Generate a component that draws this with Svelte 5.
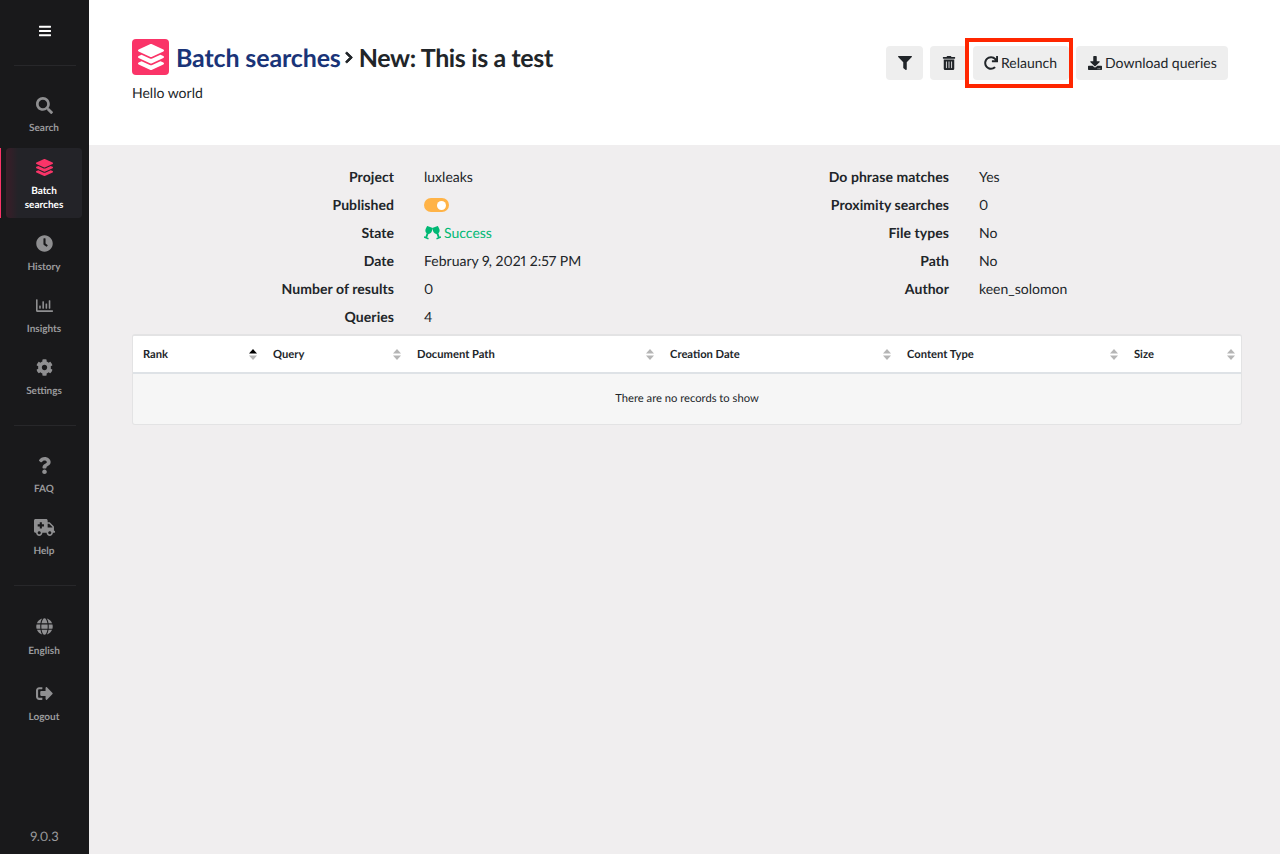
<script>
  const icons = {
    search: { vb: '0 0 512 512', d: 'M505 442.7L405.3 343c-4.5-4.5-10.6-7-17-7H372c27.6-35.3 44-79.7 44-128C416 93.1 322.9 0 208 0S0 93.1 0 208s93.1 208 208 208c48.3 0 92.7-16.4 128-44v16.3c0 6.4 2.5 12.5 7 17l99.7 99.7c9.4 9.4 24.6 9.4 33.9 0l28.3-28.3c9.4-9.4 9.4-24.6.1-34zM208 336c-70.7 0-128-57.2-128-128 0-70.7 57.2-128 128-128 70.7 0 128 57.2 128 128 0 70.7-57.2 128-128 128z' },
    layers: { vb: '0 0 512 512', d: 'M12.41 148.02l232.94 105.67c6.8 3.09 14.49 3.09 21.29 0l232.94-105.67c16.55-7.51 16.55-32.52 0-40.03L266.65 2.31a25.607 25.607 0 0 0-21.29 0L12.41 107.98c-16.55 7.51-16.55 32.53 0 40.04zm487.18 88.28l-58.09-26.33-161.64 73.27c-7.56 3.43-15.59 5.17-23.86 5.17s-16.29-1.74-23.86-5.17L70.51 209.97l-58.1 26.33c-16.55 7.5-16.55 32.5 0 40l232.94 105.59c6.8 3.08 14.49 3.08 21.29 0L499.59 276.3c16.55-7.5 16.55-32.5 0-40zm0 127.8l-57.87-26.23-161.86 73.37c-7.56 3.43-15.59 5.17-23.86 5.17s-16.29-1.74-23.86-5.17L70.29 337.87 12.41 364.1c-16.55 7.5-16.55 32.5 0 40l232.94 105.59c6.8 3.08 14.49 3.08 21.29 0L499.59 404.1c16.55-7.5 16.55-32.5 0-40z' },
    clock: { vb: '0 0 512 512', d: 'M256,8C119,8,8,119,8,256S119,504,256,504,504,393,504,256,393,8,256,8Zm92.49,313h0l-20,25a16,16,0,0,1-22.49,2.5h0l-67-49.72a40,40,0,0,1-15-31.23V112a16,16,0,0,1,16-16h32a16,16,0,0,1,16,16V256l58,42.5A16,16,0,0,1,348.49,321Z' },
    chart: { vb: '0 0 512 512', d: 'M396.8 352h22.4c6.4 0 12.8-6.4 12.8-12.8V108.8c0-6.4-6.4-12.8-12.8-12.8h-22.4c-6.4 0-12.8 6.4-12.8 12.8v230.4c0 6.4 6.4 12.8 12.8 12.8zm-192 0h22.4c6.4 0 12.8-6.4 12.8-12.8V140.8c0-6.4-6.4-12.8-12.8-12.8h-22.4c-6.4 0-12.8 6.4-12.8 12.8v198.4c0 6.4 6.4 12.8 12.8 12.8zm96 0h22.4c6.4 0 12.8-6.4 12.8-12.8V204.8c0-6.4-6.4-12.8-12.8-12.8h-22.4c-6.4 0-12.8 6.4-12.8 12.8v134.4c0 6.4 6.4 12.8 12.8 12.8zm-192 0h22.4c6.4 0 12.8-6.4 12.8-12.8v-70.4c0-6.4-6.4-12.8-12.8-12.8h-22.4c-6.4 0-12.8 6.4-12.8 12.8v70.4c0 6.4 6.4 12.8 12.8 12.8zM496 400H48V80c0-8.84-7.16-16-16-16H16C7.16 64 0 71.16 0 80v336c0 17.67 14.33 32 32 32h464c8.84 0 16-7.16 16-16v-16c0-8.84-7.16-16-16-16z' },
    cog: { vb: '0 0 512 512', d: 'M487.4 315.7l-42.6-24.6c4.3-23.2 4.3-47 0-70.2l42.6-24.6c4.9-2.8 7.1-8.6 5.5-14-11.1-35.6-30-67.8-54.7-94.6-3.8-4.1-10-5.1-14.8-2.3L380.8 110c-17.9-15.4-38.5-27.3-60.8-35.1V25.8c0-5.6-3.9-10.5-9.4-11.7-36.7-8.2-74.3-7.8-109.2 0-5.5 1.2-9.4 6.1-9.4 11.7V75c-22.2 7.9-42.8 19.8-60.8 35.1L88.7 85.5c-4.9-2.8-11-1.9-14.8 2.3-24.7 26.7-43.6 58.9-54.7 94.6-1.7 5.4.6 11.2 5.5 14L67.3 221c-4.3 23.2-4.3 47 0 70.2l-42.6 24.6c-4.9 2.8-7.1 8.6-5.5 14 11.1 35.6 30 67.8 54.7 94.6 3.8 4.1 10 5.1 14.8 2.3l42.6-24.6c17.9 15.4 38.5 27.3 60.8 35.1v49.2c0 5.6 3.9 10.5 9.4 11.7 36.7 8.2 74.3 7.8 109.2 0 5.5-1.2 9.4-6.1 9.4-11.7v-49.2c22.2-7.9 42.8-19.8 60.8-35.1l42.6 24.6c4.9 2.8 11 1.9 14.8-2.3 24.7-26.7 43.6-58.9 54.7-94.6 1.5-5.5-.7-11.3-5.6-14.1zM256 336c-44.1 0-80-35.9-80-80s35.9-80 80-80 80 35.9 80 80-35.9 80-80 80z' },
    question: { vb: '0 0 384 512', d: 'M202.021 0C122.202 0 70.503 32.703 29.914 91.026c-7.363 10.58-5.093 25.086 5.178 32.874l43.138 32.709c10.373 7.865 25.132 6.026 33.253-4.148 25.049-31.381 43.63-49.449 82.757-49.449 30.764 0 68.816 19.799 68.816 49.631 0 22.552-18.617 34.134-48.993 51.164-35.423 19.86-82.299 44.576-82.299 106.405V320c0 13.255 10.745 24 24 24h72.471c13.255 0 24-10.745 24-24v-5.773c0-42.86 125.268-44.645 125.268-160.627C377.504 66.256 286.902 0 202.021 0zM192 373.459c-38.196 0-69.271 31.075-69.271 69.271 0 38.195 31.075 69.27 69.271 69.27s69.271-31.075 69.271-69.271-31.075-69.27-69.271-69.27z' },
    ambulance: { vb: '0 0 640 512', d: 'M624 352h-16V243.9c0-12.7-5.1-24.9-14.1-33.9L494 110.1c-9-9-21.2-14.1-33.9-14.1H416V48c0-26.5-21.5-48-48-48H48C21.5 0 0 21.5 0 48v320c0 26.5 21.5 48 48 48h16c0 53 43 96 96 96s96-43 96-96h128c0 53 43 96 96 96s96-43 96-96h48c8.8 0 16-7.2 16-16v-32c0-8.8-7.2-16-16-16zM160 464c-26.5 0-48-21.5-48-48s21.5-48 48-48 48 21.5 48 48-21.5 48-48 48zm144-248c0 4.4-3.6 8-8 8h-56v56c0 4.4-3.6 8-8 8h-48c-4.4 0-8-3.6-8-8v-56h-56c-4.4 0-8-3.6-8-8v-48c0-4.4 3.6-8 8-8h56v-56c0-4.4 3.6-8 8-8h48c4.4 0 8 3.6 8 8v56h56c4.4 0 8 3.6 8 8v48zm176 248c-26.5 0-48-21.5-48-48s21.5-48 48-48 48 21.5 48 48-21.5 48-48 48zm80-208H416V144h44.1l99.9 99.9V256z' },
    globe: { vb: '0 0 496 512', d: 'M336.5 160C322 70.7 287.8 8 248 8s-74 62.7-88.5 152h177zM152 256c0 22.2 1.2 43.5 3.3 64h185.3c2.1-20.5 3.3-41.8 3.3-64s-1.2-43.5-3.3-64H155.3c-2.1 20.5-3.3 41.8-3.3 64zm324.7-96c-28.6-67.9-86.5-120.4-158-141.6 24.4 33.8 41.2 84.7 50 141.6h108zM177.2 18.4C105.8 39.6 47.8 92.1 19.3 160h108c8.7-56.9 25.5-107.8 49.9-141.6zM487.4 192H372.7c2.1 21 3.3 42.5 3.3 64s-1.2 43-3.3 64h114.6c5.5-20.5 8.6-41.8 8.6-64s-3.1-43.5-8.5-64zM120 256c0-21.5 1.2-43 3.3-64H8.6C3.2 212.5 0 233.8 0 256s3.2 43.5 8.6 64h114.6c-2-21-3.2-42.5-3.2-64zm39.5 96c14.5 89.3 48.7 152 88.5 152s74-62.7 88.5-152h-177zm159.3 141.6c71.4-21.2 129.4-73.7 158-141.6h-108c-8.8 56.9-25.6 107.8-50 141.6zM19.3 352c28.6 67.9 86.5 120.4 158 141.6-24.4-33.8-41.2-84.7-50-141.6h-108z' },
    logout: { vb: '0 0 512 512', d: 'M497 273L329 441c-15 15-41 4.5-41-17v-96H152c-13.3 0-24-10.7-24-24v-96c0-13.3 10.7-24 24-24h136V88c0-21.4 25.9-32 41-17l168 168c9.3 9.4 9.3 24.6 0 34zM192 436v-40c0-6.6-5.4-12-12-12H96c-17.7 0-32-14.3-32-32V160c0-17.7 14.3-32 32-32h84c6.6 0 12-5.4 12-12V76c0-6.6-5.4-12-12-12H96c-53 0-96 43-96 96v192c0 53 43 96 96 96h84c6.6 0 12-5.4 12-12z' }
  };
  const bars = 'M16 132h416c8.837 0 16-7.163 16-16V76c0-8.837-7.163-16-16-16H16C7.163 60 0 67.163 0 76v40c0 8.837 7.163 16 16 16zm0 160h416c8.837 0 16-7.163 16-16v-40c0-8.837-7.163-16-16-16H16c-8.837 0-16 7.163-16 16v40c0 8.837 7.163 16 16 16zm0 160h416c8.837 0 16-7.163 16-16v-40c0-8.837-7.163-16-16-16H16c-8.837 0-16 7.163-16 16v40c0 8.837 7.163 16 16 16z';
  const glass = 'M-3.200 0H3.200L3.500 3.700C3.500 6 2 7.200 1 7.500V11.400H2.800V13H-2.800V11.400H-1V7.500C-2 7.200-3.500 6-3.500 3.700Z';
  const groups = [
    [
      { icon: 'search', label: 'Search' },
      { icon: 'layers', label: 'Batch searches', active: true },
      { icon: 'clock', label: 'History' },
      { icon: 'chart', label: 'Insights' },
      { icon: 'cog', label: 'Settings' }
    ],
    [
      { icon: 'question', label: 'FAQ' },
      { icon: 'ambulance', label: 'Help', wide: true }
    ],
    [
      { icon: 'globe', label: 'English', tall: true },
      { icon: 'logout', label: 'Logout' }
    ]
  ];
  const left = [
    ['Project', 'luxleaks'],
    ['Published', 'toggle'],
    ['State', 'state'],
    ['Date', 'February 9, 2021 2:57 PM'],
    ['Number of results', '0'],
    ['Queries', '4']
  ];
  const right = [
    ['Do phrase matches', 'Yes'],
    ['Proximity searches', '0'],
    ['File types', 'No'],
    ['Path', 'No'],
    ['Author', 'keen_solomon']
  ];
  const cols = [
    { label: 'Rank', sorted: true },
    { label: 'Query' },
    { label: 'Document Path' },
    { label: 'Creation Date' },
    { label: 'Content Type' },
    { label: 'Size' }
  ];
</script>

{#snippet info(rows)}
  <dl class="info">
    {#each rows as [k, v]}
      <dt>{k}</dt>
      <dd>
        {#if v === 'toggle'}
          <span class="toggle"><span class="knob"></span></span>
        {:else if v === 'state'}
          <span class="success">
            <svg class="cheers" viewBox="0 0 18 14" aria-hidden="true">
              <path transform="translate(6.300 .6) rotate(20)" d={glass} />
              <path transform="translate(11.700 .6) rotate(-20)" d={glass} />
            </svg>
            Success
          </span>
        {:else}
          {v}
        {/if}
      </dd>
    {/each}
  </dl>
{/snippet}

<div class="app">
  <aside class="sidebar">
    <div class="burger">
      <svg viewBox="0 0 448 512" aria-hidden="true"><path d={bars} /></svg>
    </div>
    {#each groups as group}
      <hr />
      <nav class="group">
        {#each group as item}
          <div class="item" class:active={item.active} class:tall={item.tall}>
            <svg class="ico" class:wide={item.wide} viewBox={icons[item.icon].vb} aria-hidden="true"><path d={icons[item.icon].d} /></svg>
            <span class="lbl">{item.label}</span>
          </div>
        {/each}
      </nav>
    {/each}
    <div class="version">9.0.3</div>
  </aside>

  <main class="main">
    <header class="head">
      <div class="titles">
        <h1>
          <span class="logo"><svg viewBox="0 0 512 512" aria-hidden="true"><path d={icons.layers.d} /></svg></span>
          <span class="crumb">Batch searches</span>
          <svg class="chev" viewBox="0 0 320 512" aria-hidden="true"><path d="M285.476 272.971L91.132 467.314c-9.373 9.373-24.569 9.373-33.941 0l-22.667-22.667c-9.357-9.357-9.375-24.522-.04-33.901L188.505 256 34.484 101.255c-9.335-9.379-9.317-24.544.04-33.901l22.667-22.667c9.373-9.373 24.569-9.373 33.941 0L285.475 239.03c9.373 9.372 9.373 24.568.001 33.941z" /></svg>
          <span class="name">New: This is a test</span>
        </h1>
        <p class="sub">Hello world</p>
      </div>
      <div class="actions">
        <button class="btn square" aria-label="Filter">
          <svg viewBox="0 0 512 512" aria-hidden="true"><path d="M487.976 0H24.028C2.71 0-8.047 25.866 7.058 40.971L192 225.941V432c0 7.831 3.821 15.17 10.237 19.662l80 55.98C298.02 518.69 320 507.493 320 487.98V225.941l184.947-184.97C520.021 25.896 509.338 0 487.976 0z" /></svg>
        </button>
        <button class="btn square" aria-label="Delete">
          <svg viewBox="0 0 448 512" aria-hidden="true"><path d="M32 464a48 48 0 0 0 48 48h288a48 48 0 0 0 48-48V128H32zm272-256a16 16 0 0 1 32 0v224a16 16 0 0 1-32 0zm-96 0a16 16 0 0 1 32 0v224a16 16 0 0 1-32 0zm-96 0a16 16 0 0 1 32 0v224a16 16 0 0 1-32 0zM432 32H312l-9.4-18.7A24 24 0 0 0 281.1 0H166.8a23.72 23.72 0 0 0-21.4 13.3L136 32H16A16 16 0 0 0 0 48v32a16 16 0 0 0 16 16h416a16 16 0 0 0 16-16V48a16 16 0 0 0-16-16z" /></svg>
        </button>
        <button class="btn relaunch">
          <svg viewBox="0 0 512 512" aria-hidden="true"><path d="M500.33 0h-47.41a12 12 0 0 0-12 12.57l4 82.76A247.42 247.42 0 0 0 256 8C119.34 8 7.9 119.53 8 256.19 8.1 393.07 119.1 504 256 504a247.1 247.1 0 0 0 166.18-63.91 12 12 0 0 0 .48-17.43l-34-34a12 12 0 0 0-16.38-.55A176 176 0 1 1 402.1 157.8l-101.53-4.87a12 12 0 0 0-12.57 12v47.41a12 12 0 0 0 12 12h200.33a12 12 0 0 0 12-12V12a12 12 0 0 0-12-12z" /></svg>
          Relaunch
          <span class="marker"></span>
        </button>
        <button class="btn download">
          <svg viewBox="0 0 512 512" aria-hidden="true"><path d="M216 0h80c13.3 0 24 10.7 24 24v168h87.7c17.8 0 26.7 21.5 14.1 34.1L269.7 378.3c-7.5 7.5-19.8 7.5-27.3 0L90.1 226.1c-12.6-12.6-3.7-34.1 14.1-34.1H192V24c0-13.3 10.7-24 24-24zm296 376v112c0 13.3-10.7 24-24 24H24c-13.3 0-24-10.7-24-24V376c0-13.3 10.7-24 24-24h146.7l49 49c20.1 20.1 52.5 20.1 72.6 0l49-49H488c13.3 0 24 10.7 24 24zm-124 88c0-11-9-20-20-20s-20 9-20 20 9 20 20 20 20-9 20-20zm64 0c0-11-9-20-20-20s-20 9-20 20 9 20 20 20 20-9 20-20z" /></svg>
          Download queries
        </button>
      </div>
    </header>

    <section class="content">
      <div class="infos">
        {@render info(left)}
        {@render info(right)}
      </div>
      <div class="table">
        <div class="thead">
          {#each cols as c}
            <div class="th">
              <span>{c.label}</span>
              <svg class="sort" viewBox="0 0 8 11" aria-hidden="true">
                <path class:on={c.sorted} d="M4 0 8 4.500H0Z" />
                <path d="M4 11 0 6.500H8Z" />
              </svg>
            </div>
          {/each}
        </div>
        <div class="empty">There are no records to show</div>
      </div>
    </section>
  </main>
</div>

<style>
  :global(body) {
    margin: 0;
    font-family: Lato, "Liberation Sans", sans-serif;
    color: #212529;
    background: #f0eeef;
    text-rendering: geometricPrecision;
  }
  .app {
    display: flex;
    min-height: 854px;
  }
  .sidebar {
    width: 89px;
    flex: none;
    background: #19191b;
    display: flex;
    flex-direction: column;
    color: #9b9b9d;
  }
  .burger {
    height: 50px;
    display: flex;
    align-items: center;
    justify-content: center;
    padding-top: 12px;
    box-sizing: border-box;
  }
  .burger svg {
    width: 12px;
    height: 14px;
    fill: #fff;
  }
  hr {
    width: 62px;
    height: 1px;
    border: 0;
    margin: 15px auto 20px;
    background: #27272a;
  }
  .group {
    display: flex;
    flex-direction: column;
    gap: 6px;
    margin-bottom: 6px;
  }
  .item {
    margin: 0 7px 0 6px;
    min-height: 56px;
    padding-top: 11px;
    box-sizing: border-box;
    display: flex;
    flex-direction: column;
    align-items: center;
    position: relative;
    border-radius: 4px;
    font-size: 10px;
    font-weight: 700;
    line-height: 14px;
    text-align: center;
  }
  .item.tall { margin-top: 1px; margin-bottom: 5px; }
  .item.tall .ico { margin-bottom: 9px; }
  .item.active {
    background: linear-gradient(90deg, #3a1d28 0, #232328 12px);
    color: #fff;
    min-height: 70px;
  }
  .item.active::before {
    content: "";
    position: absolute;
    left: -6px;
    top: 0;
    bottom: 0;
    width: 1px;
    background: #fa3468;
  }
  .item.active .ico { fill: #fa3468; }
  .ico {
    width: 17px;
    height: 17px;
    fill: #8f8f91;
    margin-bottom: 8px;
  }
  .group:nth-of-type(1) .item:first-child .ico { margin-bottom: 7px; }
  .ico.wide { width: 21px; }
  .lbl { width: 50px; }
  .version {
    margin-top: auto;
    padding-bottom: 10px;
    text-align: center;
    font-size: 13px;
    line-height: 16px;
    color: #9b9b9d;
    font-variant-numeric: proportional-nums;
  }
  .main {
    flex: 1;
    min-width: 0;
  }
  .head {
    background: #fff;
    height: 145px;
    box-sizing: border-box;
    padding: 39px 52px 0 43px;
    display: flex;
    justify-content: space-between;
    align-items: flex-start;
  }
  h1 {
    margin: 0;
    display: flex;
    align-items: center;
    font-size: 25px;
    font-weight: 700;
    line-height: 36px;
    color: #212529;
  }
  .logo {
    width: 37px;
    height: 36px;
    border-radius: 4px;
    background: #fa3468;
    display: flex;
    align-items: center;
    justify-content: center;
    margin-right: 7px;
  }
  .logo svg {
    width: 26px;
    height: 26px;
    fill: #fff;
  }
  .crumb {
    color: #1a3478;
    letter-spacing: -.14px;
    line-height: 34px;
    padding-top: 2px;
  }
  .name {
    letter-spacing: -.37px;
    line-height: 34px;
    padding-top: 2px;
  }
  .chev {
    width: 8px;
    height: 13px;
    margin: 1px 6px 0 4px;
    fill: #212529;
    stroke: #212529;
    stroke-width: 36px;
  }
  .sub {
    margin: 9px 0 0;
    font-size: 14px;
    line-height: 18px;
  }
  .actions {
    display: flex;
    gap: 7px;
    margin-top: 7px;
  }
  .btn {
    height: 34px;
    border: 0;
    border-radius: 4px;
    background: #eee;
    padding: 0 12px 1px;
    font: 14px Lato, sans-serif;
    text-rendering: geometricPrecision;
    color: #212529;
    display: flex;
    align-items: center;
    gap: 3px;
    position: relative;
    white-space: nowrap;
  }
  .btn svg {
    width: 14px;
    height: 14px;
    fill: #212529;
    flex: none;
  }
  .btn.square {
    width: 37px;
    padding: 0;
    justify-content: center;
  }
  .relaunch { width: 96px; padding: 0 0 1px 11px; margin-left: -1px; }
  .download { width: 152px; }
  .marker {
    position: absolute;
    left: -8px;
    top: -8px;
    width: 108px;
    height: 50px;
    box-sizing: border-box;
    border: 4px solid #ff2600;
    pointer-events: none;
  }
  .content {
    padding: 18px 38px 0 43px;
  }
  .infos {
    display: grid;
    grid-template-columns: 555px 555px;
  }
  .info {
    margin: 0;
    display: grid;
    grid-template-columns: 262px 1fr;
    column-gap: 30px;
    grid-auto-rows: 28px;
    align-content: start;
    font-size: 14px;
    line-height: 28px;
  }
  dt {
    font-weight: 700;
    text-align: right;
    letter-spacing: .06px;
  }
  dd {
    margin: 0;
    display: flex;
    align-items: center;
    font-variant-numeric: proportional-nums;
  }
  .toggle {
    width: 25px;
    height: 14px;
    border-radius: 7px;
    background: #ffb347;
    display: flex;
    justify-content: flex-end;
    align-items: center;
    padding-right: 3px;
    box-sizing: border-box;
  }
  .knob {
    width: 9px;
    height: 9px;
    border-radius: 50%;
    background: #fff;
  }
  .success {
    color: #00b874;
    display: flex;
    align-items: center;
    gap: 3px;
  }
  .cheers {
    width: 17px;
    height: 14px;
    fill: #00b874;
  }
  .table {
    margin-top: 3px;
    width: 1110px;
    box-sizing: border-box;
    border: 1px solid #e3e3e4;
    border-top-width: 2px;
    border-radius: 3px;
    background: #f6f6f6;
    overflow: hidden;
  }
  .thead {
    display: grid;
    grid-template-columns: 130px 144px 253px 237px 227px 1fr;
    background: #fff;
    border-bottom: 2px solid #dee2e6;
    height: 36px;
  }
  .th {
    display: flex;
    align-items: center;
    justify-content: space-between;
    padding: 0 6px 0 10px;
    font-size: 11.2px;
    font-weight: 700;
  }
  .sort {
    width: 8px;
    height: 11px;
    fill: #b5b5b5;
  }
  .sort .on { fill: #000; }
  .empty {
    height: 50px;
    box-sizing: border-box;
    padding-bottom: 1px;
    display: flex;
    align-items: center;
    justify-content: center;
    font-size: 11.2px;
  }
</style>
